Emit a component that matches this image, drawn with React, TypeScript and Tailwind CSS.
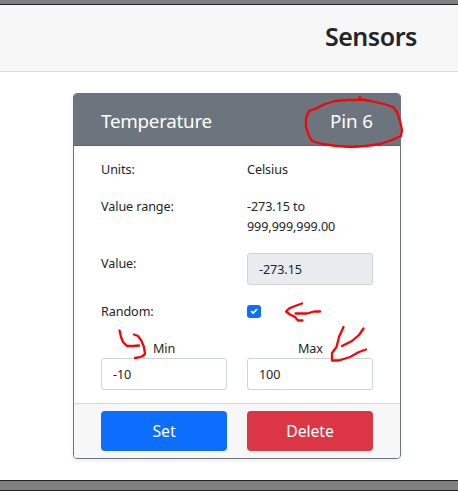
import React from "react";

function Row({ label, className, children }: { label: string; className: string; children: React.ReactNode }) {
  return (
    <div className={`grid grid-cols-2 gap-x-5 ${className}`}>
      <div>{label}</div>
      <div>{children}</div>
    </div>
  );
}

function Marks() {
  return (
    <svg
      className="pointer-events-none absolute inset-0"
      width="458"
      height="491"
      fill="none"
      stroke="#fb0207"
      strokeWidth="2.3"
      strokeLinecap="round"
      strokeLinejoin="round"
    >
      <path d="M361 100L348 100L335 101L325 104L315 109L309 111L306 118L306 127L309 136L312 141L322 144L337 146L351 147L366 146L380 144L392 140L401 136L402 130L400 121L397 112L393 107L384 104L371 101L359 99L360 97" />
      <path d="M302 303.500L295 306L289 308.500L286 311.500L290 314.500L295 317L298 320.500L302.500 320.500M295.500 313.500L307 313.500L314 311.500L320 311.500" />
      <path d="M119.500 330.500L121 337L123 342L127 346L133 346L139 345.500M134 334.500L138 336L141 340L144 347L145 354L142 356.500L138 357.500L135 358" />
      <path d="M343.500 327L339 337L336.500 347L332 353L332 360.500L339 360.500L350 357L359 352L366 349.500M363.500 328.500L359 335L352 341L342 346" />
    </svg>
  );
}

export default function App() {
  const field = "flex h-8 w-full items-center rounded-[3px] border px-[11px] pt-px";
  return (
    <div className="relative flex h-[491px] w-[458px] flex-col overflow-hidden bg-white font-['Noto_Sans',sans-serif] text-[12.6px] leading-5 tracking-[-0.08px] text-[#212529]">
      <div className="h-[5px] shrink-0 border-b border-[#212529] bg-[#808080]" />
      <header className="flex h-[67px] shrink-0 items-center justify-end border-b border-[#d9d9d9] bg-[#f7f7f7] pb-[5px] pr-[41px]">
        <h1 className="text-[25px] font-semibold leading-8 tracking-[-0.45px]">Sensors</h1>
      </header>
      <main className="flex-1 pl-[73px] pt-[21px]">
        <section className="flex h-[366px] w-[328px] flex-col overflow-hidden rounded-[4px] border border-[#6c757d] bg-white shadow-[0_2px_4px_rgba(0,0,0,0.075)]">
          <div className="flex h-[52px] shrink-0 items-center justify-between border-b border-[#5f676e] bg-[#6c757d] px-[27px] pt-[3px] text-[18.800px] text-white">
            <span className="tracking-[-0.25px]">Temperature</span>
            <span>Pin 6</span>
          </div>
          <div className="h-[257px] shrink-0 px-[27px] pt-[14px]">
            <Row label="Units:" className="h-[37px]">Celsius</Row>
            <Row label="Value range:" className="h-[57px]">-273.15 to 999,999,999.00</Row>
            <Row label="Value:" className="h-[48px]">
              <div className={`${field} -mt-px border-[#ced4da] bg-[#e9ecef]`}>-273.15</div>
            </Row>
            <Row label="Random:" className="h-[37px]">
              <div className="mt-[3px] flex h-[13px] w-[14px] items-center justify-center rounded-[3px] bg-[#0d6efd]">
                <svg width="8" height="7" viewBox="0 0 8 7" fill="none" stroke="white" strokeWidth="1.7" strokeLinecap="round" strokeLinejoin="round">
                  <path d="M1.500 3.500L3.200 5.200L6.500 1.700" />
                </svg>
              </div>
            </Row>
            <div className="grid grid-cols-2 gap-x-5">
              <label className="flex flex-col items-center">
                <span className="h-[19px]">Min</span>
                <div className={`${field} border-[#ced4da] bg-white`}>-10</div>
              </label>
              <label className="flex flex-col items-center">
                <span className="h-[19px] pl-px">Max</span>
                <div className={`${field} border-[#ced4da] bg-white`}>100</div>
              </label>
            </div>
          </div>
          <footer className="grid flex-1 grid-cols-2 gap-x-5 border-t border-[#d8d8d8] bg-[#f7f7f7] px-[27px] pt-[7px] text-[15.800px] text-white">
            <button className="h-10 rounded-[4px] bg-[#0d6efd]">Set</button>
            <button className="h-10 rounded-[4px] bg-[#dc3545]">Delete</button>
          </footer>
        </section>
      </main>
      <div className="h-[11px] shrink-0 border-y border-[#212529] bg-[#808080]" />
      <Marks />
    </div>
  );
}
